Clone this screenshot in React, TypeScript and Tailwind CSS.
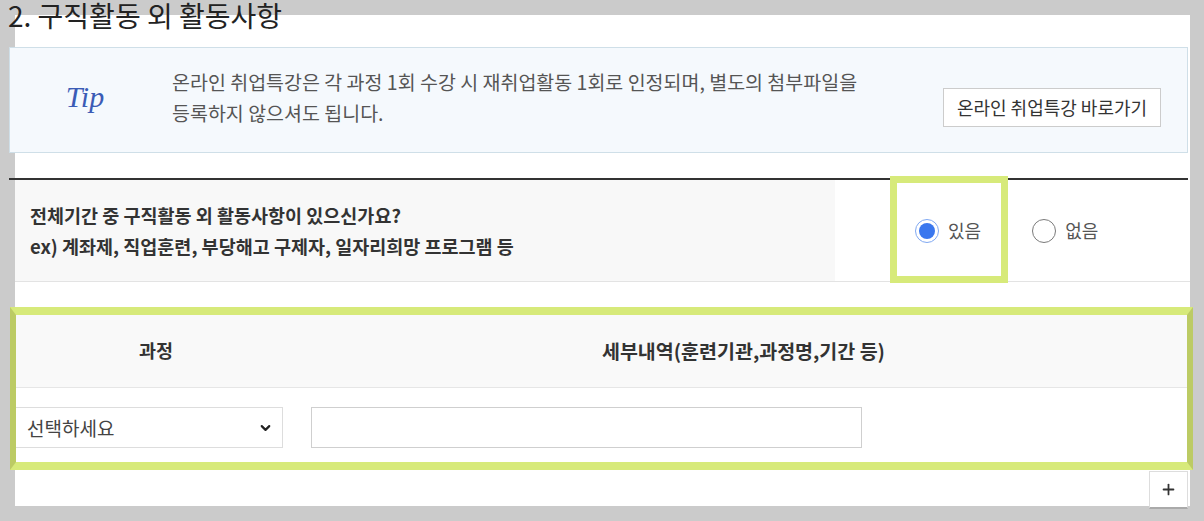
import { ChevronDown, Plus } from 'lucide-react';

const KR = { fontFamily: '"Noto Sans CJK KR", "Noto Sans", sans-serif' };

type RadioProps = {
  label: string;
  checked?: boolean;
};

function Radio({ label, checked }: RadioProps) {
  return (
    <label className="flex items-center gap-[9px]">
      {checked ? (
        <span className="flex h-[24px] w-[24px] items-center justify-center rounded-full border-[1.5px] border-[#7fa8f2] bg-white">
          <span className="h-[16px] w-[16px] rounded-full bg-[#3a77ee]" />
        </span>
      ) : (
        <span className="h-[24px] w-[24px] rounded-full border-[1.5px] border-[#7a7a7a] bg-white" />
      )}
      <span className="text-[18px] text-[#555]">{label}</span>
    </label>
  );
}

export default function App() {
  return (
    <div className="relative h-[521px] w-full overflow-hidden bg-[#cbcbcb]" style={KR}>
      {/* section title sits half over the panel */}
      <h2 className="relative z-10 h-[30px] whitespace-nowrap pl-[8px] text-[28px] leading-[30px] text-[#222]">
        2. 구직활동 외 활동사항
      </h2>

      <div className="-mt-[15px] ml-[15px] h-[491px] w-[1175px] bg-white pt-[32px]">
        {/* tip box */}
        <div className="relative -ml-[6px] flex h-[106px] w-[1179px] items-start border border-[#cfdfe8] bg-[#f5f9fd]">
          <div className="flex h-full w-[150px] items-center justify-center pb-[8px]">
            <span
              className="text-[30px] italic text-[#3b5cb6]"
              style={{ fontFamily: '"Liberation Serif", serif' }}
            >
              Tip
            </span>
          </div>
          <p className="ml-[12px] pt-[18px] text-[19.5px] leading-[31px] text-[#555]">
            온라인 취업특강은 각 과정 1회 수강 시 재취업활동 1회로 인정되며, 별도의 첨부파일을
            <br />
            등록하지 않으셔도 됩니다.
          </p>
          <button className="ml-auto mr-[26px] mt-[40px] h-[39px] w-[218px] border border-[#cccccc] bg-white text-[18px] text-[#333]">
            온라인 취업특강 바로가기
          </button>
        </div>

        {/* question row */}
        <div className="-ml-[6px] mt-[25px] h-[2px] w-[1179px] bg-[#333]" />
        <div className="flex h-[102px] border-b border-[#e3e3e3]">
          <div className="flex w-[820px] flex-col justify-center bg-[#f8f8f8] pl-[15px] text-[18.5px] font-bold leading-[31px] text-[#333]">
            <p>전체기간 중 구직활동 외 활동사항이 있으신가요?</p>
            <p>ex) 계좌제, 직업훈련, 부당해고 구제자, 일자리희망 프로그램 등</p>
          </div>
          <div className="flex flex-1 items-center gap-[51px] pl-[80px]">
            <Radio label="있음" checked />
            <Radio label="없음" />
          </div>
        </div>

        {/* detail table */}
        <div className="mt-[33px] flex h-[73px] border-b border-[#e6e6e6] bg-[#f9f9f9] text-[18.5px] font-bold text-[#333]">
          <div className="flex w-[282px] items-center justify-center">과정</div>
          <div className="flex flex-1 items-center justify-center text-[19.5px]">세부내역(훈련기관,과정명,기간 등)</div>
        </div>
        <div className="flex items-center pt-[19px]">
          <div className="relative h-[41px] w-[268px] border border-[#dddddd] bg-white">
            <span className="absolute left-[11px] top-1/2 -translate-y-1/2 text-[19px] text-[#444]">선택하세요</span>
            <ChevronDown
              size={15}
              strokeWidth={3.5}
              className="absolute right-[9px] top-1/2 -translate-y-1/2 text-[#222]"
            />
          </div>
          <input className="ml-[28px] h-[41px] w-[551px] border border-[#cfcfcf] bg-white outline-none" />
        </div>

        <div className="mt-[23px] flex justify-end pr-[2px]">
          <button className="flex h-[38px] w-[39px] items-center justify-center border border-b-2 border-[#dddddd] border-b-[#aaaaaa] bg-white text-[#333]">
            <Plus size={17} strokeWidth={2.5} />
          </button>
        </div>
      </div>

      {/* highlight marks drawn over the page */}
      <div className="pointer-events-none absolute left-[890px] top-[176px] h-[107px] w-[118px] border-[7px] border-[#d7ea7a]" />
      <div className="pointer-events-none absolute left-[10px] top-[307px] h-[163px] w-[1183px] border-y-[8px] border-x-[6px] border-y-[#d7ea7a] border-x-[#bccb64]" />
    </div>
  );
}
